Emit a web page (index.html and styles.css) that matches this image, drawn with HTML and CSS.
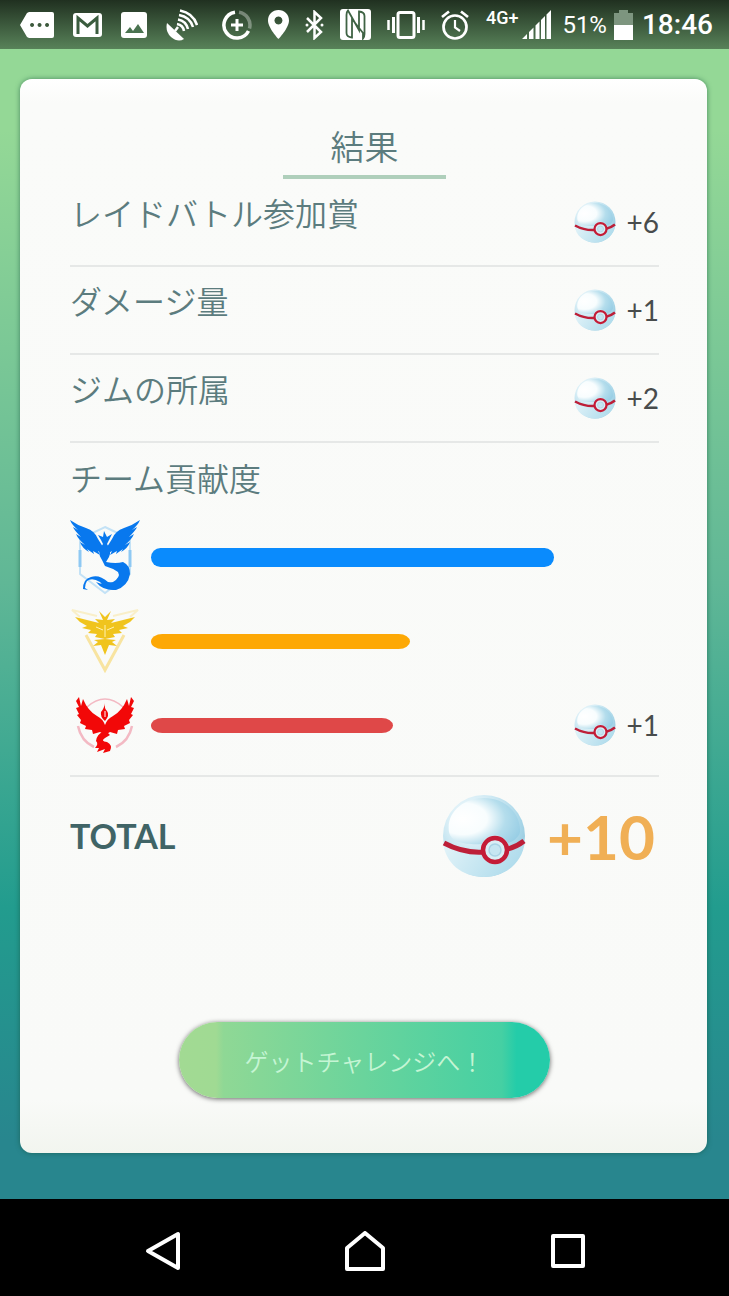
FILE: index.html
```html
<!DOCTYPE html>
<html lang="ja">
<head>
<meta charset="UTF-8">
<meta name="viewport" content="width=device-width, initial-scale=1.0">
<title>結果</title>
<link rel="stylesheet" href="styles.css">
</head>
<body>
<!-- shared ball artwork -->
<svg class="defs" width="0" height="0" aria-hidden="true">
    <defs>
        <radialGradient id="ballBody" cx="0.35" cy="0.3" r="0.75">
            <stop offset="0" stop-color="#ffffff"/>
            <stop offset="0.4" stop-color="#d8eef6"/>
            <stop offset="0.8" stop-color="#a8d6e8"/>
            <stop offset="1" stop-color="#93c6dc"/>
        </radialGradient>
        <radialGradient id="ballShine" cx="0.2" cy="0.45" r="0.85">
            <stop offset="0" stop-color="#ffffff"/>
            <stop offset="0.4" stop-color="#f8fdfe"/>
            <stop offset="0.7" stop-color="#b4ddec"/>
            <stop offset="1" stop-color="#98cee5"/>
        </radialGradient>
        <linearGradient id="ballBase" x1="0" y1="0" x2="1" y2="0.3">
            <stop offset="0" stop-color="#e4f4f9"/>
            <stop offset="1" stop-color="#b0dcec"/>
        </linearGradient>
        <symbol id="ball" viewBox="0 0 84 84">
            <circle cx="42" cy="42" r="41" fill="url(#ballBody)"/>
            <path d="M1 48C14 56 28 58 42 58C58 58 72 55 83 47C81 68 64 83 42 83C20 83 3 69 1 48Z" fill="url(#ballBase)"/>
            <path d="M7 38C4 18 22 4 42 4C64 4 79 20 78 38C77 44 70 48 66 49C60 38 44 39 40 50C26 51 9 49 7 38Z" fill="url(#ballShine)"/>
            <path d="M2 49C15 56 28 59 42 58C58 58 72 55 82 47" fill="none" stroke="#bd1f38" stroke-width="5"/>
            <circle cx="53" cy="56" r="12" fill="#d9eef5" stroke="#c41c37" stroke-width="4.5"/>
            <circle cx="53" cy="56" r="6" fill="#c6e6f2" stroke="#a9d3e5" stroke-width="1.5"/>
        </symbol>
    </defs>
</svg>

<div class="screen">
    <header class="status-bar">
        <div class="notifications">
            <svg width="34" height="26" viewBox="0 0 34 26"><path fill="#fff" fill-rule="evenodd" d="M9 0H32Q34 0 34 2V24Q34 26 32 26H9L7 25L0 13L7 1ZM12 11a2 2 0 1 0 .1 0ZM19.500 11a2 2 0 1 0 .1 0ZM27 11a2 2 0 1 0 .1 0Z"/></svg>
            <svg width="29" height="24" viewBox="0 0 29 24"><rect width="29" height="24" rx="3" fill="#fff"/><path d="M5 21V5L14.500 13L24 5V21" fill="none" stroke="#3a5c3e" stroke-width="3"/></svg>
            <svg width="26" height="26" viewBox="0 0 26 26"><rect width="26" height="26" rx="3" fill="#fff"/><path d="M4 21L9 15L12 19L17 12L23 21Z" fill="#4a7350"/></svg>
            <svg width="32" height="32" viewBox="0 0 32 32"><path d="M1 14L18 30Q12 34 5 28Q-1 22 1 14Z" fill="#fff"/><g fill="none" stroke="#fff" stroke-width="2.500"><path d="M9 22L12 18"/><path d="M11 15Q17 16 18 22"/><path d="M12 10.500Q20 12 22 20"/><path d="M13 6Q24 8 27 18"/><path d="M14 1.500Q27 4 31 16"/></g></svg>
        </div>
        <div class="system">
            <svg width="30" height="30" viewBox="0 0 30 30"><g fill="none" stroke="#fff" stroke-width="3.500"><path d="M13 2.200A13 13 0 1 0 26.500 21"/><path d="M17 2.200A13 13 0 0 1 27.500 18.500" stroke-opacity="0.350"/><path d="M15 9V21M9 15H21" stroke-width="3"/></g></svg>
            <svg width="21" height="29" viewBox="0 0 21 29"><path fill="#fff" fill-rule="evenodd" d="M10.500 0C4.500 0 0 4.600 0 10.500C0 18 10.500 29 10.500 29S21 18 21 10.500C21 4.600 16.500 0 10.500 0ZM10.500 6.500a4 4 0 1 1-.1 0Z"/></svg>
            <svg width="19" height="30" viewBox="0 0 19 30"><path d="M2 8L16 22L9.500 28V2L16 8L2 22" fill="none" stroke="#fff" stroke-width="2.500"/><circle cx="2" cy="15" r="1.500" fill="#fff"/><circle cx="17" cy="15" r="1.500" fill="#fff"/></svg>
            <svg width="31" height="31" viewBox="0 0 31 31"><rect width="31" height="31" rx="3" fill="#fff"/><path d="M8 1.500Q6.500 3 6.500 6V24Q6.500 28 12 28.500V10L23 24V29.500Q24.500 28 24.500 25V7Q24.500 3 19 2.500V21Z" fill="none" stroke="#3f6344" stroke-width="1.800"/></svg>
            <svg width="38" height="28" viewBox="0 0 38 28"><g fill="none" stroke="#fff"><rect x="11" y="1.500" width="16" height="25" rx="2" stroke-width="3"/><path d="M6.500 6V22M31.500 6V22" stroke-width="3"/><path d="M1.500 9V19M36.500 9V19" stroke-width="2.500"/></g></svg>
            <svg width="28" height="30" viewBox="0 0 28 30"><g fill="none" stroke="#fff" stroke-width="2.700"><circle cx="14" cy="17" r="11.500"/><path d="M14 10V17.500L19 21" stroke-width="2.200"/><path d="M1 7L8 1.500M27 7L20 1.500"/></g></svg>
        </div>
        <div class="network">
            <span class="net-type">4G+</span>
            <svg width="29" height="29" viewBox="0 0 29 29"><path fill="#fff" d="M0 29L5 24V29ZM7 29V22L11.500 17.500V29ZM13.500 29V15.500L17.500 11.500V29ZM19 29V10L23 6V29ZM24.500 29V4.500L29 0V29Z"/></svg>
        </div>
        <div class="battery">
            <span class="percent">51%</span>
            <svg width="19" height="30" viewBox="0 0 19 30"><path fill="#7d957f" d="M5 0H14V3H19V15H0V3H5Z"/><path fill="#fff" d="M0 15H19V30H0Z"/></svg>
            <time class="clock">18:46</time>
        </div>
    </header>

    <main class="page">
        <section class="card">
            <h1>結果</h1>
            <div class="row">
                <span class="label">レイドバトル参加賞</span>
                <span class="reward"><svg class="ball"><use href="#ball"/></svg>+6</span>
            </div>
            <div class="row">
                <span class="label">ダメージ量</span>
                <span class="reward"><svg class="ball"><use href="#ball"/></svg>+1</span>
            </div>
            <div class="row">
                <span class="label">ジムの所属</span>
                <span class="reward"><svg class="ball"><use href="#ball"/></svg>+2</span>
            </div>

            <div class="teams">
                <h2 class="label">チーム貢献度</h2>
                <div class="team">
                    <!-- blue team -->
                    <svg class="team-logo" viewBox="1 0 70 76">
                        <path d="M36 8L61 20V55L36 74L11 55V20Z" fill="none" stroke="#c3e2f6" stroke-width="2"/>
                        <path d="M11 31V48M61 31V48" stroke="#8fc9f3" stroke-width="3"/>
                        <g fill="#0878ee">
                            <path d="M1 1Q8 6 17 9Q26 12 29 20L34 28V35L29 32L31 36L24 32L25 35L18 30L20 33Q13 29 11 23L16 26Q9 20 7 15L12 18Q5 11 4 8L9 11Q3 6 1 1Z"/>
                            <path d="M71 1Q64 6 55 9Q46 12 43 20L38 28V35L43 32L41 36L48 32L47 35L54 30L52 33Q59 29 61 23L56 26Q63 20 65 15L60 18Q67 11 68 8L63 11Q69 6 71 1Z"/>
                            <path d="M35 12L38 18L43 15L40 21L38 25Q43 32 40 38L37 43Q47 45 54 43Q61 46 61 55Q59 67 47 71Q34 72 27 63Q35 67 44 63Q52 58 49 53Q43 49 36 47L33 41Q27 33 34 25L32 21L29 16L34 18Z"/>
                            <path d="M47 71Q37 71 31 63Q23 58 18 62Q16 65 16 69L19 71L14 70Q14 60 22 58Q30 55 39 63L47 64Z"/>
                        </g>
                    </svg>
                    <span class="track"><span class="bar blue" style="width: 79.3%"></span></span>
                </div>
                <div class="team">
                    <!-- yellow team -->
                    <svg class="team-logo" viewBox="1 0 70 76">
                        <path d="M17 32L36 67L55 32" fill="none" stroke="#f8e4a0" stroke-width="3"/>
                        <path d="M28 13L3 7L11 14M44 13L69 7L61 14" fill="none" stroke="#f9efc9" stroke-width="2"/>
                        <g fill="#f0c41d">
                            <path d="M36 36L26 34L28 31L19 30L22 27L13 25L18 23L11 19L6 14L30 20L26 16L34 17L30 8L36 14L42 8L38 17L46 16L42 20L66 14L61 19L54 23L59 25L50 27L53 30L44 31L46 34Z"/>
                            <path d="M36 36L47 37L43 39L48 43L40 42L36 52L32 42L24 43L29 39L25 37Z"/>
                        </g>
                        <path d="M36 22V34M27 24L34 27M45 24L38 27" stroke="#fff3b3" stroke-width="1"/>
                    </svg>
                    <span class="track"><span class="bar yellow" style="width: 51%"></span></span>
                </div>
                <div class="team">
                    <!-- red team -->
                    <svg class="team-logo" viewBox="1 0 70 76">
                        <g fill="none" stroke="#f3b9c3">
                            <path d="M18 20Q36 4 54 20" stroke-width="1.500"/>
                            <path d="M9 39Q12 54 25 60M63 39Q60 54 47 60" stroke-width="2.500"/>
                        </g>
                        <g fill="#f20808">
                            <path d="M10 10L12 19L14 12Q19 24 28 29Q34 32 36 38Q38 32 44 29Q53 24 58 12L60 19L62 10L65 14L62 20L65 21L62 27L64 28L60 33L61 36L55 39L56 42L49 43L48 47L41 45L36 48L31 45L24 47L23 43L16 42L17 39L11 36L12 33L8 28L10 27L7 21L10 20L7 14Z"/>
                            <path d="M36 16Q35 21 38 24Q41 28 36 34Q31 30 32 25Q35 22 36 16Z"/>
                            <path d="M34 45H38L41 48L36 51Q31 54 38 55Q44 58 41 64L34 66L36 62L28 65L30 61L26 61Q30 57 27 54Q28 47 34 45Z"/>
                        </g>
                        <path d="M36 24V30" stroke="#fff" stroke-width="1"/>
                    </svg>
                    <span class="track"><span class="bar red" style="width: 47.6%"></span></span>
                    <span class="reward"><svg class="ball"><use href="#ball"/></svg>+1</span>
                </div>
            </div>

            <div class="total">
                <strong class="total-label">TOTAL</strong>
                <span class="total-reward"><svg class="ball-large"><use href="#ball"/></svg>+10</span>
            </div>
            <button class="next" type="button">ゲットチャレンジへ！</button>
        </section>
    </main>

    <nav class="nav-bar">
        <button type="button" aria-label="戻る"><svg width="40" height="40" viewBox="0 0 40 40"><path d="M6 20L36 3V37Z"/></svg></button>
        <button type="button" aria-label="ホーム"><svg width="40" height="40" viewBox="0 0 40 40"><path d="M2 38V17L20 2L38 17V38Z"/></svg></button>
        <button type="button" aria-label="アプリ履歴"><svg width="40" height="40" viewBox="0 0 40 40"><rect x="5" y="5" width="30" height="30"/></svg></button>
    </nav>
</div>
</body>
</html>
```
FILE: styles.css
```css
* {
    box-sizing: border-box;
}
body {
    margin: 0;
    font-family: Lato, "Noto Sans CJK JP", sans-serif;
    color: #5c7c7e;
}
svg {
    display: block;
    flex: none;
}
.defs {
    position: absolute;
}
.screen {
    display: flex;
    flex-direction: column;
    min-height: 100vh;
    background: linear-gradient(#94d896 0%, #94d896 10%, #60b796 45%, #229c8e 70%, #28868e 88%);
}

/* status bar */
.status-bar {
    display: flex;
    align-items: center;
    height: 49px;
    padding: 0 16px 0 20px;
    background: linear-gradient(#203020, #588259);
    color: #fff;
    font-family: Roboto, sans-serif;
}
.notifications,
.system,
.network,
.battery {
    display: flex;
    align-items: center;
}
.notifications {
    gap: 19px;
}
.system {
    gap: 16px;
    margin-left: 24px;
}
.network {
    gap: 4px;
    margin-left: auto;
}
.battery {
    gap: 7px;
    margin-left: 11px;
}
.net-type {
    align-self: flex-start;
    font-size: 18px;
    font-weight: 500;
    line-height: 16px;
}
.percent {
    font-size: 24px;
}
.clock {
    margin-left: 2px;
    font-size: 28px;
    font-weight: 500;
}

/* result card */
.page {
    display: flex;
    flex: 1;
    padding: 30px 22px 46px 20px;
}
.card {
    display: flex;
    flex: 1;
    flex-direction: column;
    padding: 48px 48px 55px 50px;
    border-radius: 12px;
    background: linear-gradient(#fff, #fafbf9 24px, #f9faf8 95%, #f2f5ef);
    box-shadow: 0 0 5px rgba(20, 80, 60, 0.6);
}
h1 {
    align-self: center;
    width: 163px;
    margin: 0;
    padding-bottom: 8px;
    border-bottom: 4px solid #afcfbb;
    font-size: 34px;
    font-weight: 350;
    line-height: 40px;
    text-align: center;
}
.row {
    display: flex;
    align-items: center;
    justify-content: space-between;
    height: 88px;
    border-bottom: 2px solid #e6e8e7;
}
.label {
    margin: 0;
    padding-bottom: 16px;
    font-size: 32px;
    font-weight: 350;
    line-height: 40px;
}
.reward {
    display: flex;
    align-items: center;
    gap: 11px;
    color: #484c4c;
    font-size: 28px;
}
.ball {
    width: 42px;
    height: 42px;
}
.teams {
    padding: 16px 0 8px;
    border-bottom: 2px solid #e6e8e7;
}
.team {
    display: flex;
    align-items: center;
    height: 84px;
}
.team-logo {
    width: 70px;
    height: 76px;
    margin-right: 11px;
}
.track {
    flex: 1;
}
.team .reward {
    margin-left: -85px;
}
.bar {
    display: block;
    height: 15px;
    border-radius: 12px / 8px;
}
.bar.blue {
    height: 19px;
    border-radius: 10px;
    background: #0a8bfd;
}
.bar.yellow {
    background: #fda805;
}
.bar.red {
    background: #df4848;
}
.total {
    display: flex;
    align-items: center;
    justify-content: space-between;
    height: 117px;
}
.total-label {
    color: #406466;
    font-size: 34px;
}
.total-reward {
    display: flex;
    align-items: center;
    gap: 21px;
    padding-right: 4px;
    color: #f0af55;
    font-size: 62px;
    font-weight: 700;
}
.ball-large {
    width: 84px;
    height: 84px;
}
.next {
    align-self: center;
    width: 371px;
    height: 76px;
    margin-top: auto;
    border: 0;
    border-radius: 38px;
    background: linear-gradient(90deg, #a2da93 0%, #a0da93 10%, #8fd895 12%, #45d0a3 87%, #24cca9 91%);
    box-shadow: 0 1px 5px rgba(0, 0, 0, 0.6);
    color: #c5f5d4;
    font-family: inherit;
    font-size: 24px;
    font-weight: 350;
}

/* navigation bar */
.nav-bar {
    display: flex;
    align-items: center;
    justify-content: space-around;
    height: 97px;
    padding: 6px 60px 0;
    background: #000;
}
.nav-bar button {
    padding: 0;
    border: 0;
    background: none;
}
.nav-bar svg {
    fill: none;
    stroke: #fff;
    stroke-width: 4;
    stroke-linejoin: round;
}
```
